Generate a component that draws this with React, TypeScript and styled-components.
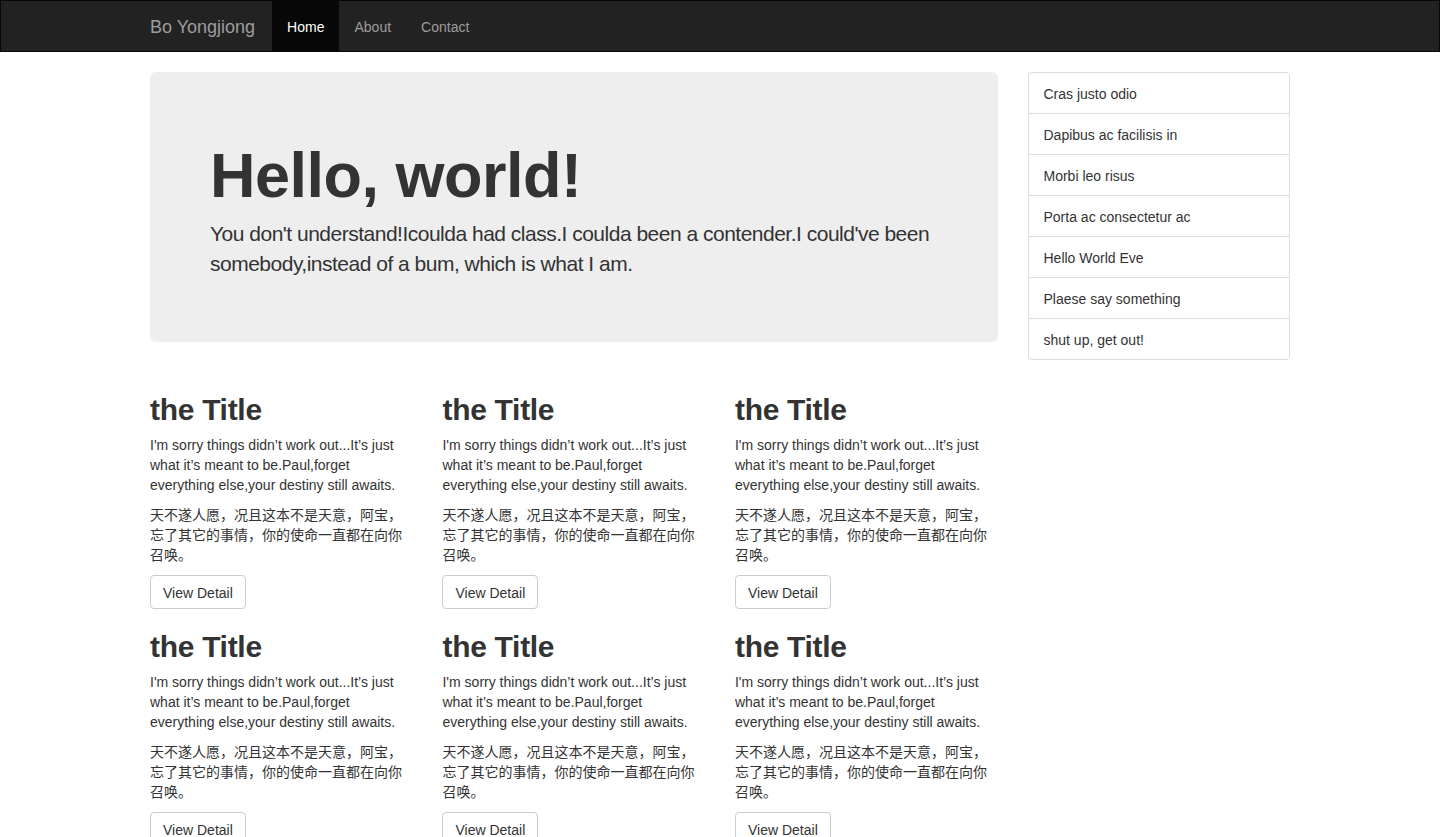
import React from "react";
import styled, { createGlobalStyle } from "styled-components";

const Global = createGlobalStyle`
  * { box-sizing: border-box; }
  html, body { margin: 0; padding: 0; }
  body {
    font-family: "Liberation Sans", Arial, "Noto Sans CJK SC", sans-serif;
    font-size: 14px;
    line-height: 1.42857143;
    color: #333;
    background: #fff;
  }
`;

const Navbar = styled.nav`
  background: #222;
  border: 1px solid #080808;
  min-height: 52px;
  margin-bottom: 20px;
`;

const NavInner = styled.div`
  width: 1170px;
  margin: 0 auto;
  padding: 0 15px;
  display: flex;
  align-items: stretch;
`;

const Brand = styled.a`
  display: block;
  padding: 16px 17px 14px 15px;
  margin-left: -15px;
  font-size: 18px;
  line-height: 20px;
  height: 50px;
  color: #9d9d9d;
  text-decoration: none;
`;

const NavList = styled.ul`
  list-style: none;
  margin: 0;
  padding: 0;
  display: flex;
`;

const NavLink = styled.a<{ $active?: boolean }>`
  display: block;
  padding: 16px 15px 14px;
  line-height: 20px;
  color: ${(p) => (p.$active ? "#fff" : "#9d9d9d")};
  background: ${(p) => (p.$active ? "#080808" : "transparent")};
  text-decoration: none;
`;

const Container = styled.div`
  width: 1170px;
  margin: 0 auto;
  padding: 0 15px;
`;

const Row = styled.div`
  display: flex;
  flex-wrap: wrap;
  margin: 0 -15px;
`;

const Col = styled.div<{ $span: number }>`
  width: ${(p) => (p.$span / 12) * 100}%;
  padding: 0 15px;
`;

const Jumbotron = styled.div`
  background: #eee;
  border-radius: 6px;
  padding: 48px 60px;
  margin-bottom: 30px;
`;

const JumboTitle = styled.h1`
  font-size: 63px;
  font-weight: 700;
  line-height: 1.1;
  margin: 21px 0 9px;
  letter-spacing: -0.5px;
  color: #333;
`;

const JumboText = styled.p`
  font-size: 21px;
  font-weight: 300;
  letter-spacing: -0.5px;
  margin: 0 0 15px;
  padding-top: 1px;
  margin-top: -1px;
  color: #333;
`;

const ListGroup = styled.div`
  display: flex;
  flex-direction: column;
`;

const ListItem = styled.a`
  display: block;
  padding: 11px 15px 9px;
  margin-bottom: -1px;
  border: 1px solid #ddd;
  background: #fff;
  color: #333;
  text-decoration: none;
  line-height: 20px;
  &:first-child { border-top-left-radius: 4px; border-top-right-radius: 4px; }
  &:last-child { border-bottom-left-radius: 4px; border-bottom-right-radius: 4px; margin-bottom: 0; }
`;

const CardTitle = styled.h2`
  font-size: 30px;
  font-weight: 700;
  line-height: 1.1;
  margin: 21px 0 9px;
  letter-spacing: -0.3px;
  color: #333;
`;

const CardText = styled.p`
  margin: 0 0 10px;
  padding-top: 1px;
  margin-top: -1px;
`;

const Button = styled.a`
  display: inline-block;
  padding: 7px 12px 5px;
  font-size: 14px;
  line-height: 20px;
  border: 1px solid #ccc;
  border-radius: 4px;
  background: #fff;
  color: #333;
  text-decoration: none;
`;

const menu = [
  "Cras justo odio",
  "Dapibus ac facilisis in",
  "Morbi leo risus",
  "Porta ac consectetur ac",
  "Hello World Eve",
  "Plaese say something",
  "shut up, get out!",
];

const Card = () => (
  <Col $span={4}>
    <CardTitle>the Title</CardTitle>
    <CardText>
      I'm sorry things didn’t work out...It’s just what it’s meant to be.Paul,forget everything else,your destiny still awaits.
    </CardText>
    <CardText>天不遂人愿，况且这本不是天意，阿宝，忘了其它的事情，你的使命一直都在向你召唤。</CardText>
    <Button href="#">View Detail</Button>
  </Col>
);

export default function App() {
  return (
    <>
      <Global />
      <Navbar>
        <NavInner>
          <Brand href="#">Bo Yongjiong</Brand>
          <NavList>
            <li><NavLink href="#" $active>Home</NavLink></li>
            <li><NavLink href="#">About</NavLink></li>
            <li><NavLink href="#">Contact</NavLink></li>
          </NavList>
        </NavInner>
      </Navbar>
      <Container>
        <Row>
          <Col $span={9}>
            <Jumbotron>
              <JumboTitle>Hello, world!</JumboTitle>
              <JumboText>
                You don't understand!Icoulda had class.I coulda been a contender.I could've been somebody,instead of a bum, which is what I am.
              </JumboText>
            </Jumbotron>
            <Row>
              {Array.from({ length: 6 }).map((_, i) => (
                <Card key={i} />
              ))}
            </Row>
          </Col>
          <Col $span={3}>
            <ListGroup>
              {menu.map((m) => (
                <ListItem href="#" key={m}>{m}</ListItem>
              ))}
            </ListGroup>
          </Col>
        </Row>
      </Container>
    </>
  );
}
